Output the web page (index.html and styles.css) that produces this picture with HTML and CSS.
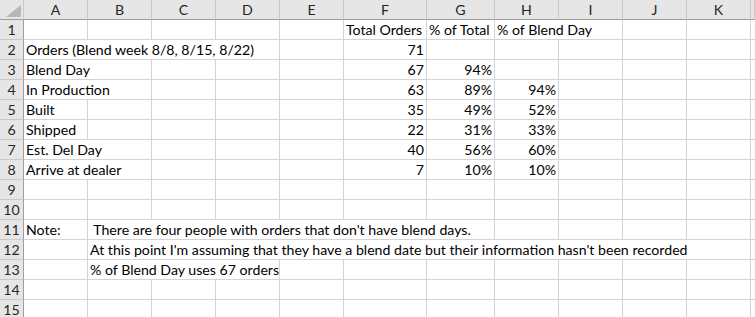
FILE: index.html
```html
<!DOCTYPE html>
<html lang="en">
<head>
<meta charset="utf-8">
<title>Blend week orders</title>
<link rel="stylesheet" href="styles.css">
</head>
<body>
<div class="sheet">
  <!-- column headers -->
  <div class="corner"><svg class="corner-mark" width="15" height="12" viewBox="0 0 15 12"><polygon points="15,0 15,12 0,12" /></svg></div>
  <div class="ch">A</div><div class="ch">B</div><div class="ch">C</div><div class="ch">D</div><div class="ch">E</div><div class="ch">F</div><div class="ch">G</div><div class="ch">H</div><div class="ch">I</div><div class="ch">J</div><div class="ch">K</div><div class="ch"></div>

  <!-- row 1 -->
  <div class="rh">1</div>
  <div class="c"></div><div class="c"></div><div class="c"></div><div class="c"></div><div class="c"></div>
  <div class="c">Total Orders</div><div class="c">% of Total</div><div class="c s2">% of Blend Day</div>
  <div class="c"></div><div class="c"></div><div class="c"></div>

  <!-- row 2 -->
  <div class="rh">2</div>
  <div class="c s4">Orders (Blend week 8/8, 8/15, 8/22)</div><div class="c"></div>
  <div class="c num">71</div><div class="c"></div><div class="c"></div>
  <div class="c"></div><div class="c"></div><div class="c"></div><div class="c"></div>

  <!-- row 3 -->
  <div class="rh">3</div>
  <div class="c s2">Blend Day</div><div class="c"></div><div class="c"></div><div class="c"></div>
  <div class="c num">67</div><div class="c num">94%</div><div class="c"></div>
  <div class="c"></div><div class="c"></div><div class="c"></div><div class="c"></div>

  <!-- row 4 -->
  <div class="rh">4</div>
  <div class="c s2">In Production</div><div class="c"></div><div class="c"></div><div class="c"></div>
  <div class="c num">63</div><div class="c num">89%</div><div class="c num">94%</div>
  <div class="c"></div><div class="c"></div><div class="c"></div><div class="c"></div>

  <!-- row 5 -->
  <div class="rh">5</div>
  <div class="c">Built</div><div class="c"></div><div class="c"></div><div class="c"></div><div class="c"></div>
  <div class="c num">35</div><div class="c num">49%</div><div class="c num">52%</div>
  <div class="c"></div><div class="c"></div><div class="c"></div><div class="c"></div>

  <!-- row 6 -->
  <div class="rh">6</div>
  <div class="c">Shipped</div><div class="c"></div><div class="c"></div><div class="c"></div><div class="c"></div>
  <div class="c num">22</div><div class="c num">31%</div><div class="c num">33%</div>
  <div class="c"></div><div class="c"></div><div class="c"></div><div class="c"></div>

  <!-- row 7 -->
  <div class="rh">7</div>
  <div class="c s2">Est. Del Day</div><div class="c"></div><div class="c"></div><div class="c"></div>
  <div class="c num">40</div><div class="c num">56%</div><div class="c num">60%</div>
  <div class="c"></div><div class="c"></div><div class="c"></div><div class="c"></div>

  <!-- row 8 -->
  <div class="rh">8</div>
  <div class="c s2">Arrive at dealer</div><div class="c"></div><div class="c"></div><div class="c"></div>
  <div class="c num">7</div><div class="c num">10%</div><div class="c num">10%</div>
  <div class="c"></div><div class="c"></div><div class="c"></div><div class="c"></div>

  <!-- row 9 -->
  <div class="rh">9</div>
  <div class="c"></div><div class="c"></div><div class="c"></div><div class="c"></div><div class="c"></div><div class="c"></div>
  <div class="c"></div><div class="c"></div><div class="c"></div><div class="c"></div><div class="c"></div><div class="c"></div>

  <!-- row 10 -->
  <div class="rh">10</div>
  <div class="c"></div><div class="c"></div><div class="c"></div><div class="c"></div><div class="c"></div><div class="c"></div>
  <div class="c"></div><div class="c"></div><div class="c"></div><div class="c"></div><div class="c"></div><div class="c"></div>

  <!-- row 11 -->
  <div class="rh">11</div>
  <div class="c">Note:</div><div class="c s6"> There are four people with orders that don't have blend days.</div>
  <div class="c"></div><div class="c"></div><div class="c"></div><div class="c"></div><div class="c"></div>

  <!-- row 12 -->
  <div class="rh">12</div>
  <div class="c"></div><div class="c s10">At this point I'm assuming that they have a blend date but their information hasn't been recorded</div>
  <div class="c"></div>

  <!-- row 13 -->
  <div class="rh">13</div>
  <div class="c"></div><div class="c s3">% of Blend Day uses 67 orders</div>
  <div class="c"></div><div class="c"></div><div class="c"></div><div class="c"></div><div class="c"></div>
  <div class="c"></div><div class="c"></div><div class="c"></div>

  <!-- row 14 -->
  <div class="rh">14</div>
  <div class="c"></div><div class="c"></div><div class="c"></div><div class="c"></div><div class="c"></div><div class="c"></div>
  <div class="c"></div><div class="c"></div><div class="c"></div><div class="c"></div><div class="c"></div><div class="c"></div>

  <!-- row 15 -->
  <div class="rh">15</div>
  <div class="c"></div><div class="c"></div><div class="c"></div><div class="c"></div><div class="c"></div><div class="c"></div>
  <div class="c"></div><div class="c"></div><div class="c"></div><div class="c"></div><div class="c"></div><div class="c"></div>
</div>
</body>
</html>
```
FILE: styles.css
```css
html, body {
  margin: 0;
  padding: 0;
  background: #ffffff;
  overflow: hidden;
}

.sheet {
  display: grid;
  /* row-number column, A–E, F (wider), G, H–K, and whatever of L fits */
  grid-template-columns: 24px 64px 64px 64px 64px 64px 83px 68px 64px 64px 64px 64px minmax(0, 1fr);
  grid-auto-rows: 20px;
  font-family: Lato, "Open Sans", sans-serif;
  font-size: 14.15px;
  color: #000;
  width: 100%;
}

.corner,
.ch,
.rh,
.c {
  box-sizing: border-box;
  white-space: pre;
  overflow: hidden;
  min-width: 0;
}

/* header strip */
.corner {
  background: #e6e6e6;
  border-right: 1px solid #c9c9c9;
  border-bottom: 1px solid #9e9e9e;
  position: relative;
}

.corner-mark {
  position: absolute;
  right: 2px;
  bottom: 2px;
}

.corner-mark polygon {
  fill: #b7b7b7;
}

.ch {
  background: #e6e6e6;
  border-right: 1px solid #c9c9c9;
  border-bottom: 1px solid #9e9e9e;
  color: #262626;
  text-align: center;
  line-height: 19px;
}

.rh {
  background: #e6e6e6;
  border-right: 1px solid #9e9e9e;
  border-bottom: 1px solid #c9c9c9;
  color: #262626;
  text-align: center;
  line-height: 19px;
}

/* worksheet cells */
.c {
  border-right: 1px solid #d4d4d4;
  border-bottom: 1px solid #d4d4d4;
  line-height: 19px;
  padding: 0 2px;
}

.num {
  text-align: right;
}

.s2 { grid-column: span 2; }
.s3 { grid-column: span 3; }
.s4 { grid-column: span 4; }
.s6 { grid-column: span 6; }
.s10 { grid-column: span 10; }
```
